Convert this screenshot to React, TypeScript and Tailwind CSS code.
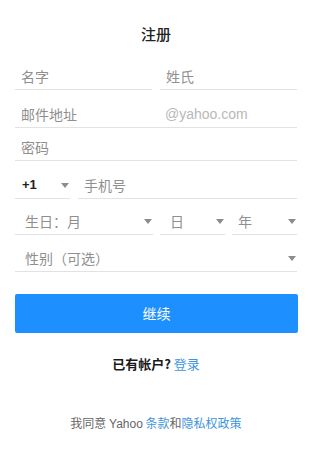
import React from "react";

const cjk = "font-['Noto_Sans_CJK_SC','Noto_Sans',sans-serif]";

const Caret = () => (
  <svg width="8" height="5" viewBox="0 0 8 5" className="shrink-0">
    <path d="M0 0h8L4 5z" fill="#8c8c8c" />
  </svg>
);

const Field = ({
  label,
  className = "",
  pad = "pl-[6px]",
  caret = false,
  textClass = "text-[#8f8f8f]",
}: {
  label: string;
  className?: string;
  pad?: string;
  caret?: boolean;
  textClass?: string;
}) => (
  <div
    className={`flex h-[27px] items-center justify-between border-b border-[#e2e2e2] pr-[1px] ${pad} ${className}`}
  >
    <span className={`text-[14px] leading-[20px] ${textClass}`}>{label}</span>
    {caret && <Caret />}
  </div>
);

export default function App() {
  return (
    <div className={`min-h-[449px] w-[312px] bg-white px-[15px] ${cjk}`}>
      <h1 className="pt-[24px] text-center text-[15px] font-medium leading-[20px] text-[#222]">
        注册
      </h1>

      <div className="mt-[19px] flex gap-[8px]">
        <Field label="名字" className="flex-1" />
        <Field label="姓氏" className="flex-1" />
      </div>

      <div className="mt-[11px] flex h-[27px] items-center border-b border-[#e2e2e2] pl-[6px]">
        <span className="w-[144px] text-[14px] leading-[20px] text-[#8f8f8f]">邮件地址</span>
        <span className="font-['Liberation_Sans',sans-serif] text-[14px] leading-[20px] text-[#b8b8b8]">
          @yahoo.com
        </span>
      </div>

      <Field label="密码" className="mt-[6px]" />

      <div className="mt-[11px] flex gap-[8px]">
        <div className="flex h-[27px] w-[55px] items-center justify-between border-b border-[#e2e2e2] pl-[7px] pr-[1px]">
          <span className="font-['Liberation_Sans',sans-serif] text-[13px] font-bold leading-[20px] text-[#222]">
            +1
          </span>
          <Caret />
        </div>
        <Field label="手机号" className="flex-1" />
      </div>

      <div className="mt-[9px] flex gap-[7px]">
        <Field label="生日：月" className="w-[138px]" pad="pl-[10px]" caret />
        <Field label="日" className="w-[65px]" pad="pl-[10px]" caret />
        <Field label="年" className="w-[65px]" pad="pl-[6px]" caret />
      </div>

      <Field label="性别（可选）" className="mt-[10px]" pad="pl-[10px]" caret />

      <button
        type="button"
        className="mt-[22px] flex h-[39px] w-[283px] items-center justify-center rounded-[2px] bg-[#1e8fff] text-[14px] text-white"
      >
        继续
      </button>

      <p className="mt-[22px] text-center text-[13px] leading-[18px] text-[#1a1a1a]">
        <span className="font-bold">已有帐户? </span>
        <span className="text-[#3d95e0]">登录</span>
      </p>

      <p className="mt-[42px] text-center text-[12px] leading-[16px] text-[#666]">
        我同意 <span className="font-['Liberation_Sans',sans-serif]">Yahoo</span>{" "}
        <span className="text-[#3d95e0]">条款</span>和
        <span className="text-[#3d95e0]">隐私权政策</span>
      </p>
    </div>
  );
}
